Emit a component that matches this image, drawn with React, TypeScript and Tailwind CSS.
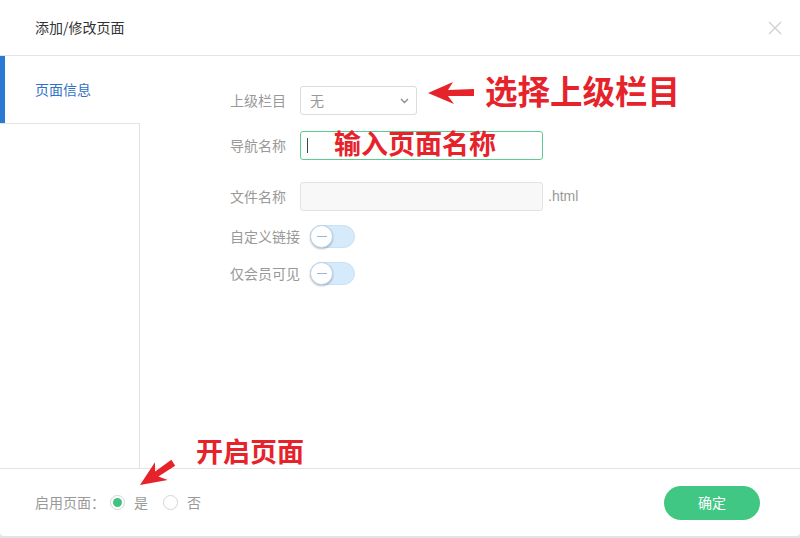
import React from "react";

const cjk = { fontFamily: '"Noto Sans CJK SC", "Liberation Sans", sans-serif' };

// small toggle in "off" state
function Toggle() {
  return (
    <div className="relative h-[23px] w-[45px] rounded-full border border-[#c9e1f6] bg-[#d5eafb]">
      <div className="absolute -left-px -top-px flex h-[23px] w-[23px] items-center justify-center rounded-full border border-[#b9d3ea] bg-white shadow-[0_1px_2px_rgba(0,0,0,0.25)]">
        <div className="h-[1.5px] w-[10px] bg-[#9bb8d3]"></div>
      </div>
    </div>
  );
}

function Radio({ checked }: { checked?: boolean }) {
  return (
    <div className="flex h-[15px] w-[15px] items-center justify-center rounded-full border border-[#d4d4d4] bg-white">
      {checked && <div className="h-[9px] w-[9px] rounded-full bg-[#3fc381]"></div>}
    </div>
  );
}

export default function App() {
  return (
    <div className="h-[538px] w-[800px] overflow-hidden bg-[#e4e4e4]" style={cjk}>
      <div className="relative flex h-[536px] w-[800px] flex-col rounded-b-[4px] bg-white">
        {/* header */}
        <div className="flex h-[56px] shrink-0 items-center justify-between border-b border-[#e3e3e3] pl-[35px] pr-[17px]">
          <span className="text-[14px] text-[#333]">添加/修改页面</span>
          <svg width="16" height="16" viewBox="0 0 16 16">
            <path d="M2 2 L14 14 M14 2 L2 14" stroke="#d0d0d0" strokeWidth="1.4" />
          </svg>
        </div>

        {/* body */}
        <div className="flex flex-1">
          <div className="flex w-[140px] flex-col">
            <div className="flex h-[67px] items-center border-l-[5px] border-[#2a79d4] pl-[30px]">
              <span className="text-[14px] text-[#2f72c8]">页面信息</span>
            </div>
            <div className="flex-1 border-r border-t border-[#e3e3e3]"></div>
          </div>

          <div className="flex flex-1 flex-col pl-[90px] pt-[30px] text-[14px] text-[#999]">
            <div className="flex h-[29px] items-center">
              <span className="w-[70px]">上级栏目</span>
              <div className="flex h-[29px] w-[117px] items-center justify-between rounded-[3px] border border-[#dcdcdc] pl-[9px] pr-[7px]">
                <span className="text-[#999]">无</span>
                <svg width="9" height="6" viewBox="0 0 9 6">
                  <path d="M1 1 L4.5 4.5 L8 1" fill="none" stroke="#8a8a8a" strokeWidth="1.3" />
                </svg>
              </div>
            </div>

            <div className="mt-[16px] flex h-[29px] items-center">
              <span className="w-[70px]">导航名称</span>
              <div className="flex h-[29px] w-[243px] items-center rounded-[3px] border border-[#5ccb92] pl-[6px]">
                <div className="h-[15px] w-px bg-[#444]"></div>
              </div>
            </div>

            <div className="mt-[22px] flex h-[29px] items-center">
              <span className="w-[70px]">文件名称</span>
              <div className="h-[29px] w-[243px] rounded-[3px] border border-[#e2e2e2] bg-[#f8f8f8]"></div>
              <span className="ml-[5px]" style={{ fontFamily: '"Liberation Sans", sans-serif' }}>.html</span>
            </div>

            <div className="mt-[14px] flex h-[23px] items-center gap-[10px]">
              <span>自定义链接</span>
              <Toggle />
            </div>

            <div className="mt-[14px] flex h-[23px] items-center gap-[10px]">
              <span>仅会员可见</span>
              <Toggle />
            </div>
          </div>
        </div>

        {/* footer */}
        <div className="flex h-[68px] shrink-0 items-center justify-between border-t border-[#e3e3e3] pl-[35px] pr-[40px]">
          <div className="flex items-center text-[14px] text-[#999]">
            <span>启用页面：</span>
            <div className="ml-[5px] flex items-center gap-[9px]">
              <Radio checked />
              <span>是</span>
            </div>
            <div className="ml-[15px] flex items-center gap-[9px]">
              <Radio />
              <span>否</span>
            </div>
          </div>
          <button className="h-[34px] w-[96px] rounded-full bg-[#41c784] text-[14px] text-white">确定</button>
        </div>

        {/* red annotations */}
        <span className="absolute left-[485px] top-[70px] text-[32.5px] font-bold leading-[40px] text-[#e6232b]">选择上级栏目</span>
        <span className="absolute left-[334px] top-[127px] text-[27px] font-bold leading-[32px] text-[#e6232b]">输入页面名称</span>
        <span className="absolute left-[196px] top-[435px] text-[27px] font-bold leading-[32px] text-[#e6232b]">开启页面</span>
        <svg className="pointer-events-none absolute left-0 top-0" width="800" height="536">
          <polygon points="428,93 453,82 448,90 474,89 474,96 448,96 454,104" fill="#e6232b" />
          <g transform="rotate(-33 140 485)">
            <polygon points="140,485 165,474 160,482 180,481 180,488 160,488 166,496" fill="#e6232b" />
          </g>
        </svg>
      </div>
    </div>
  );
}
